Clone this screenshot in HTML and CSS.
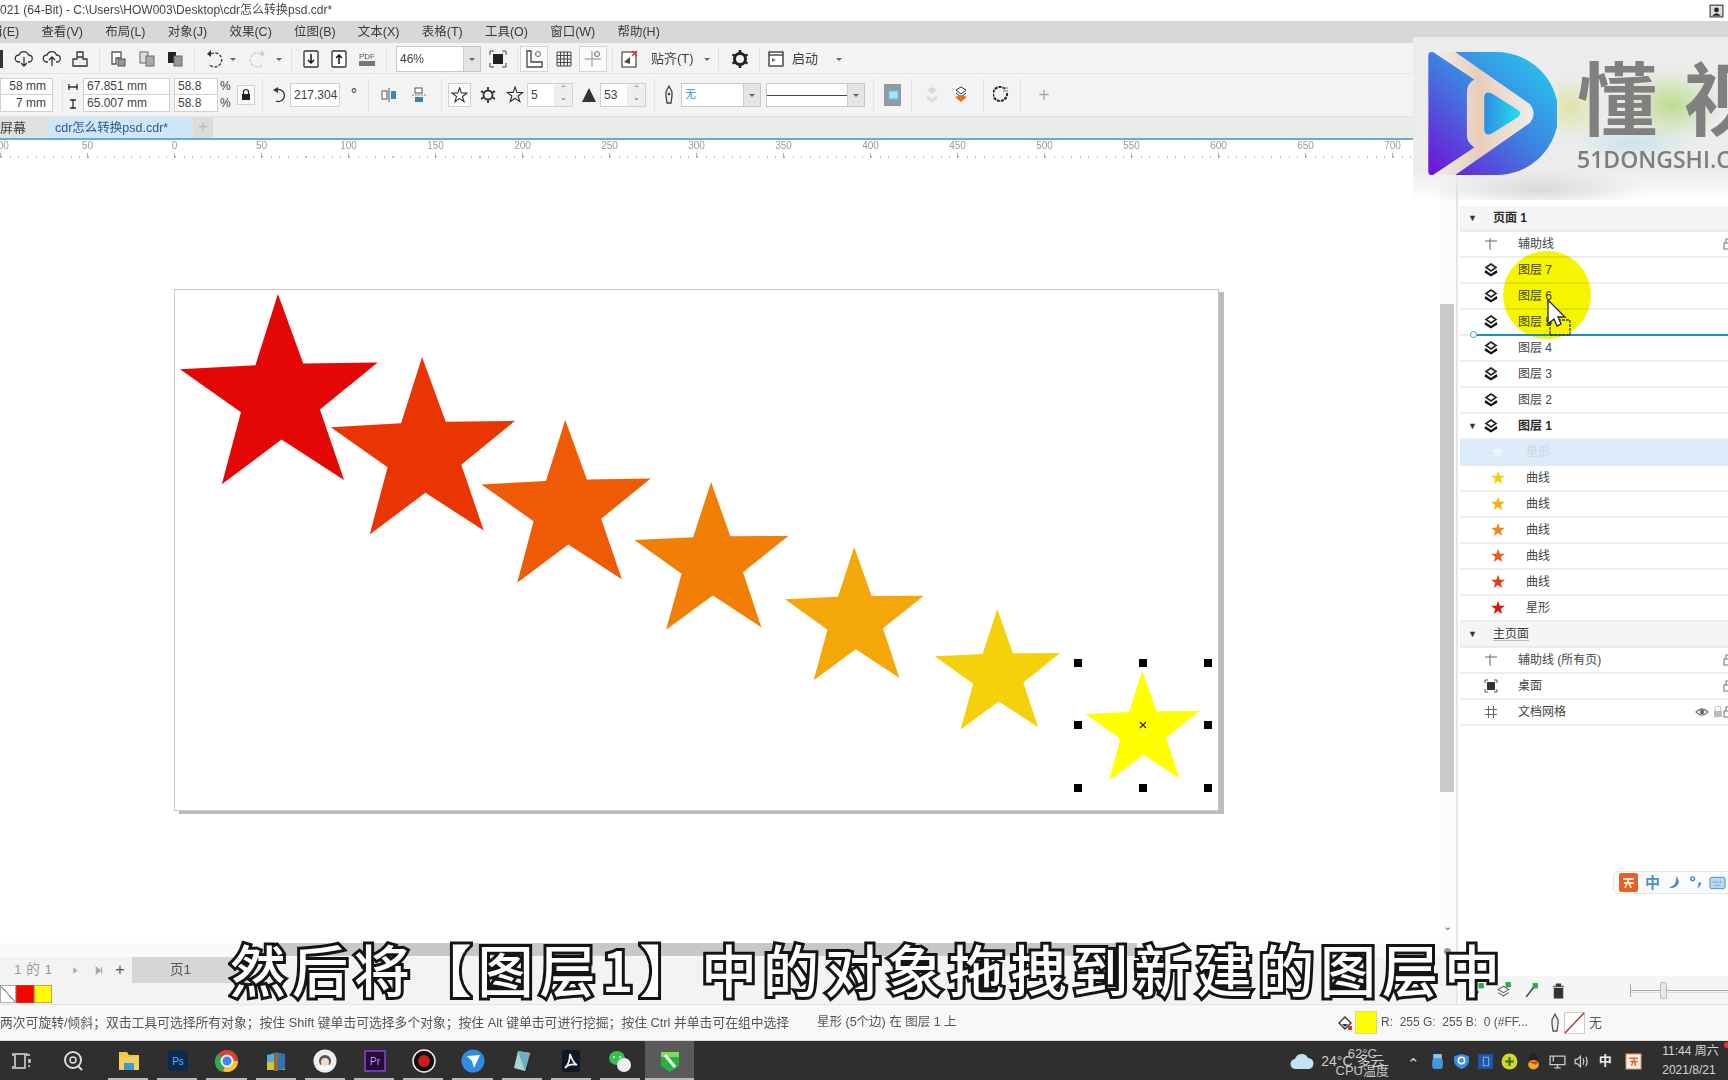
FILE: index.html
```html
<!DOCTYPE html>
<html lang="zh-CN">
<head>
<meta charset="utf-8">
<title>CorelDRAW</title>
<link rel="stylesheet" href="styles.css">
</head>
<body>
<svg class="defs" width="0" height="0" aria-hidden="true">
  <defs>
    <polygon id="star" points="1.500,-100 23.500,-32.400 95.100,-30.900 38,12.400 58.800,80.900 0,40 -58.800,80.900 -38,12.400 -95.100,-30.900 -22.500,-32.400"/>
    <symbol id="layer" viewBox="0 0 14 14"><path d="M7 1 12 4.500 7 8 2 4.500Z" fill="#fff" stroke="#222" stroke-width="1.600"/><path d="M1.500 7 7 11 12.500 7 13.500 9.500 7 13.500 .5 9.500Z" fill="#111"/></symbol>
    <symbol id="guide" viewBox="0 0 14 14"><path d="M6 1V13M1 4H13" stroke="#666" stroke-width="1" fill="none"/></symbol>
    <symbol id="printer" viewBox="0 0 14 14"><path d="M4 6V2H10V6M2 6H12V12H2Z" fill="none" stroke="#777" stroke-width="1.100"/></symbol>
    <symbol id="caret" viewBox="0 0 10 10"><path d="M2 4H8L5 7Z" fill="#666"/></symbol>
    <symbol id="cloudd" viewBox="0 0 20 20"><path d="M6 13H4.500A3.500 3.500 0 0 1 5 6 5 5 0 0 1 14.500 6 3.500 3.500 0 0 1 15 13H14M10 8V17M7 14 10 17 13 14" fill="none" stroke="#333" stroke-width="1.300"/></symbol>
    <symbol id="cloudu" viewBox="0 0 20 20"><path d="M6 13H4.500A3.500 3.500 0 0 1 5 6 5 5 0 0 1 14.500 6 3.500 3.500 0 0 1 15 13H14M10 17V8M7 11 10 8 13 11" fill="none" stroke="#333" stroke-width="1.300"/></symbol>
    <symbol id="doc" viewBox="0 0 20 20"><path d="M3 3H12V9H7V15H3Z" fill="#fff" stroke="#555" stroke-width="1.300"/><rect x="9" y="10" width="7" height="7" fill="#999" stroke="#555"/></symbol>
    <symbol id="imp" viewBox="0 0 20 20"><rect x="3" y="2" width="14" height="16" rx="1" fill="#fff" stroke="#333" stroke-width="1.300"/><path d="M10 5V14M7 11 10 14 13 11" fill="none" stroke="#111" stroke-width="1.500"/></symbol>
    <symbol id="exp" viewBox="0 0 20 20"><rect x="3" y="2" width="14" height="16" rx="1" fill="#fff" stroke="#333" stroke-width="1.300"/><path d="M10 15V6M7 9 10 6 13 9" fill="none" stroke="#111" stroke-width="1.500"/></symbol>
    <symbol id="gear" viewBox="0 0 20 20"><circle cx="10" cy="10" r="5.500" fill="none" stroke="#222" stroke-width="3"/><path d="M10 1V4M10 16V19M2.500 5.500 5 7M15 13 17.500 14.500M2.500 14.500 5 13M15 7 17.500 5.500" stroke="#222" stroke-width="2.600"/></symbol>
    <symbol id="ostar" viewBox="-110 -110 220 220"><use href="#star" fill="none" stroke="#333" stroke-width="14"/></symbol>
    <symbol id="eye" viewBox="0 0 14 14"><path d="M1 7Q7 1 13 7 7 13 1 7Z" fill="none" stroke="#777" stroke-width="1.200"/><circle cx="7" cy="7" r="2.200" fill="#666"/></symbol>
  </defs>
</svg>

<header class="title">
  <span>021 (64-Bit) - C:\Users\HOW003\Desktop\cdr怎么转换psd.cdr*</span>
  <svg class="profile" viewBox="0 0 14 14"><rect x="1" y="2" width="12" height="11" fill="#ddd" stroke="#333"/><circle cx="7" cy="6.500" r="2.200" fill="#222"/><path d="M3 12Q7 7 11 12Z" fill="#222"/></svg>
</header>

<nav class="menu">
  <span class="menu-first">辑(E)</span><span>查看(V)</span><span>布局(L)</span><span>对象(J)</span><span>效果(C)</span><span>位图(B)</span><span>文本(X)</span><span>表格(T)</span><span>工具(O)</span><span>窗口(W)</span><span>帮助(H)</span>
</nav>

<div class="toolbar">
  <i class="sliver"></i>
  <i class="tc"><svg class="i"><use href="#cloudd"/></svg></i>
  <i class="tc"><svg class="i"><use href="#cloudu"/></svg></i>
  <i class="tc"><svg class="i" viewBox="0 0 20 20"><path d="M7 8V3H13V8M3 10H7V8H13V10H17V17H3Z" fill="none" stroke="#333" stroke-width="1.300"/></svg></i>
  <i class="sep"></i>
  <i class="tc"><svg class="i"><use href="#doc"/></svg></i>
  <i class="tc"><svg class="i" viewBox="0 0 20 20"><rect x="3" y="3" width="8" height="11" fill="#ddd" stroke="#666"/><rect x="9" y="7" width="8" height="10" fill="#aaa" stroke="#666"/></svg></i>
  <i class="tc"><svg class="i" viewBox="0 0 20 20"><rect x="3" y="3" width="8" height="11" fill="#222"/><rect x="9" y="7" width="8" height="10" fill="#999" stroke="#666"/></svg></i>
  <i class="sep"></i>
  <i class="tc"><svg class="i" viewBox="0 0 20 20"><path d="M7 5A7 7 0 1 1 5 15" fill="none" stroke="#444" stroke-width="1.400" stroke-dasharray="3 1.500"/><path d="M7 1V8L3 5Z" fill="#333"/></svg></i>
  <i class="tcar"><svg class="i9"><use href="#caret"/></svg></i>
  <i class="tc ml6"><svg class="i" viewBox="0 0 20 20"><path d="M13 5A7 7 0 1 0 15 15" fill="none" stroke="#ccc" stroke-width="1.400" stroke-dasharray="3 1.500"/><path d="M13 1V8L17 5Z" fill="#ccc"/></svg></i>
  <i class="tcar wide"><svg class="i9"><use href="#caret"/></svg></i>
  <i class="sep"></i>
  <i class="tc"><svg class="i"><use href="#imp"/></svg></i>
  <i class="tc"><svg class="i"><use href="#exp"/></svg></i>
  <i class="tc"><span class="pdf">PDF</span></i>
  <i class="sep"></i>
  <div class="combo zoomc ml4"><span>46%</span><b><svg class="i9"><use href="#caret"/></svg></b></div>
  <i class="tc ml3"><svg class="i" viewBox="0 0 20 20"><rect x="5" y="5" width="10" height="10" fill="#222"/><path d="M2 6V2H6M14 2H18V6M2 14V18H6M14 18H18V14" fill="none" stroke="#444"/></svg></i>
  <i class="sep tight"></i>
  <i class="tc on"><svg class="i" viewBox="0 0 20 20"><path d="M3 2H7V13H18V18H3Z" fill="#fff" stroke="#444" stroke-width="1.300"/><circle cx="14" cy="5" r="2.500" fill="none" stroke="#666"/></svg></i>
  <i class="tc ml2"><svg class="i" viewBox="0 0 20 20"><path d="M3 3H17V17H3ZM3 6.500H17M3 10H17M3 13.500H17M6.500 3V17M10 3V17M13.500 3V17" fill="none" stroke="#444"/></svg></i>
  <i class="tc on ml1"><svg class="i" viewBox="0 0 20 20"><path d="M9 2V18M2 10H18" stroke="#aaa" stroke-width="1.300"/><circle cx="14" cy="5" r="2.500" fill="none" stroke="#666"/></svg></i>
  <i class="sep tight"></i>
  <i class="tc"><svg class="i" viewBox="0 0 20 20"><rect x="3" y="3" width="14" height="15" fill="#fff" stroke="#555" stroke-width="1.300"/><path d="M5 13 11 8V15Z" fill="#444"/><path d="M13 2 18 7M18 2 13 7" stroke="#d33" stroke-width="1.500"/></svg></i>
  <span class="lbl ml8">贴齐(T)</span>
  <i class="tcar ml8 w12"><svg class="i9"><use href="#caret"/></svg></i>
  <i class="sep"></i>
  <i class="tc ml2"><svg class="i"><use href="#gear"/></svg></i>
  <i class="sep tight"></i>
  <i class="tc"><svg class="i" viewBox="0 0 20 20"><rect x="3" y="3" width="14" height="14" fill="#fff" stroke="#333" stroke-width="1.300"/><path d="M3 6H17" stroke="#333" stroke-width="1.300"/><path d="M6 9 10 11 6 13Z" fill="#777"/></svg></i>
  <span class="lbl short ml2">启动</span>
  <i class="tcar ml13 w12"><svg class="i9"><use href="#caret"/></svg></i>
</div>

<div class="propbar">
  <div class="stack w53"><span class="field">58 mm</span><span class="field">7 mm</span></div>
  <i class="sep2 ml9"></i>
  <div class="stack w10 ml5 icons">
    <svg class="i10" viewBox="0 0 10 10"><path d="M0 5H10M1 2V8M9 2V8" stroke="#333" stroke-width="1.300"/></svg>
    <svg class="i10" viewBox="0 0 10 10"><path d="M5 0V10M2 1H8M2 9H8" stroke="#333" stroke-width="1.300"/></svg>
  </div>
  <div class="stack w87 ml5"><span class="field">67.851 mm</span><span class="field">65.007 mm</span></div>
  <div class="stack w44 ml4"><span class="field">58.8</span><span class="field">58.8</span></div>
  <div class="stack w12 ml2 pct"><span>%</span><span>%</span></div>
  <i class="lockb ml5"><svg class="i14" viewBox="0 0 14 14"><path d="M4.500 6V4A2.500 2.500 0 0 1 9.500 4V6" fill="none" stroke="#222" stroke-width="1.200"/><rect x="3" y="6" width="8" height="6" fill="#222"/></svg></i>
  <i class="sep2 ml7"></i>
  <i class="ic16 ml8"><svg viewBox="0 0 16 16"><path d="M5 3A6 6 0 1 1 5 14" fill="none" stroke="#333" stroke-width="1.200"/><path d="M7 0V6L2 3Z" fill="#333"/></svg></i>
  <span class="field single w50 ml3">217.304</span>
  <span class="deg ml8">°</span>
  <i class="sep2 ml8"></i>
  <i class="ic16 ml12"><svg viewBox="0 0 16 16"><path d="M8 1V15" stroke="#555"/><rect x="1" y="4" width="5" height="8" fill="#fff" stroke="#555"/><rect x="10" y="4" width="5" height="8" fill="#3c86b8"/></svg></i>
  <i class="ic16 ml14"><svg viewBox="0 0 16 16"><path d="M1 8H15" stroke="#777" stroke-dasharray="2 1"/><rect x="4" y="1" width="7" height="5" fill="#fff" stroke="#555"/><rect x="4" y="10" width="8" height="5" fill="#2f85b9"/></svg></i>
  <i class="sep2 ml14"></i>
  <i class="starbox ml6"><svg class="i16"><use href="#ostar"/></svg></i>
  <i class="ic18 ml8"><svg viewBox="0 0 18 18"><circle cx="9" cy="9" r="4.500" fill="none" stroke="#333" stroke-width="1.800"/><path d="M9 1V4M9 14V17M2 5 5 7M13 11 16 13M2 13 5 11M13 7 16 5" stroke="#333" stroke-width="1.800"/></svg></i>
  <i class="ic18 ml9"><svg class="i18"><use href="#ostar"/></svg></i>
  <div class="spin w46 ml3"><span>5</span><b>⌃<br>⌄</b></div>
  <i class="ic16 ml8"><svg viewBox="0 0 16 16"><path d="M8 1 15 15H1Z" fill="#333"/></svg></i>
  <div class="spin w46 ml3"><span>53</span><b>⌃<br>⌄</b></div>
  <i class="sep2 ml8"></i>
  <i class="ic12 ml8"><svg viewBox="0 0 12 20"><path d="M6 1 9 7V11L8 18H4L3 11V7Z" fill="#eee" stroke="#444" stroke-width="1.300"/><circle cx="6" cy="9" r="1.300" fill="#444"/></svg></i>
  <div class="combo w80 ml6"><span class="noneval">无</span><b><svg class="i9"><use href="#caret"/></svg></b></div>
  <div class="combo w99 ml5"><span class="linev"></span><b><svg class="i9"><use href="#caret"/></svg></b></div>
  <i class="sep2 ml8"></i>
  <i class="bluebox ml10"><svg viewBox="0 0 17 22"><rect width="17" height="22" fill="#8f9aa3"/><rect x="5" y="7" width="9" height="8" fill="#a5e3f5" stroke="#5cc4e4"/></svg></i>
  <i class="sep2 ml10"></i>
  <i class="ic16 ml12"><svg viewBox="0 0 16 18"><path d="M8 1 13 4 8 8 3 4Z" fill="#d8d8d8"/><path d="M3 9 8 13 13 9V13L8 17 3 13Z" fill="#dedede"/></svg></i>
  <i class="ic16 ml13"><svg viewBox="0 0 16 18"><path d="M8 1 13 4 8 8 3 4Z" fill="#fff" stroke="#333"/><path d="M3 7 8 11 13 7" fill="none" stroke="#333"/><path d="M2 11 8 16 14 11 8 9Z" fill="#e5701f"/></svg></i>
  <i class="sep2 ml14"></i>
  <i class="ic16 ml9"><svg viewBox="0 0 16 18"><path d="M12 3A7 7 0 1 0 14 7" fill="none" stroke="#222" stroke-width="2" stroke-dasharray="3 1"/><path d="M10 2H15M10 5H15" stroke="#777"/></svg></i>
  <i class="sep2 ml11"></i>
  <span class="plus ml15">+</span>
</div>

<div class="tabs">
  <span class="tab-old">屏幕</span>
  <span class="tab-cur">cdr怎么转换psd.cdr*</span>
  <span class="tab-add">+</span>
</div>

<div class="ruler">
  <span>100</span><span>50</span><span>0</span><span>50</span><span>100</span><span>150</span><span>200</span><span>250</span><span>300</span><span>350</span><span>400</span><span>450</span><span>500</span><span>550</span><span>600</span><span>650</span><span>700</span>
</div>

<div class="work">
  <div class="left">
    <div class="canvasrow">
      <main class="area">
        <div class="page">
          <svg class="art" viewBox="174 289 1045 522">
            <use href="#star" fill="#e50606" transform="translate(280 398) rotate(-2) scale(1.040)"/>
            <use href="#star" fill="#ea3402" transform="translate(424 454) rotate(-2) scale(.97)"/>
            <use href="#star" fill="#ee5a06" transform="translate(567 509) rotate(-2) scale(.89)"/>
            <use href="#star" fill="#f17f06" transform="translate(712 563) rotate(-1.500) scale(.81)"/>
            <use href="#star" fill="#f3a709" transform="translate(855 620) rotate(-1.500) scale(.73)"/>
            <use href="#star" fill="#f6d10b" transform="translate(998 675) rotate(-1.500) scale(.66)"/>
            <use href="#star" fill="#ffff00" transform="translate(1143 731) rotate(-1.500) scale(.6)"/>
            <g fill="#000">
              <rect x="1074" y="659" width="8" height="8"/><rect x="1139" y="659" width="8" height="8"/><rect x="1204" y="659" width="8" height="8"/>
              <rect x="1074" y="721" width="8" height="8"/><rect x="1204" y="721" width="8" height="8"/>
              <rect x="1074" y="784" width="8" height="8"/><rect x="1139" y="784" width="8" height="8"/><rect x="1204" y="784" width="8" height="8"/>
            </g>
            <path d="M1140 722 1146 728M1146 722 1140 728" stroke="#333" stroke-width="1.300"/>
          </svg>
        </div>
      </main>
      <div class="vscroll"><div class="vthumb"></div><span class="vdown">⌄</span><i class="vdot"></i></div>
    </div>
    <div class="hscroll"><div class="hthumb"></div></div>
    <div class="nav">
      <span class="pageof">1 的 1</span>
      <svg class="navi" viewBox="0 0 10 10"><path d="M3 2 7 5 3 8Z" fill="#aaa"/></svg>
      <svg class="navi ml13" viewBox="0 0 10 10"><path d="M2 2 6 5 2 8ZM7 2V8" fill="#aaa" stroke="#aaa"/></svg>
      <span class="navplus">+</span>
      <span class="pagetab">页1</span>
    </div>
    <div class="palette">
      <i class="sw none"></i><i class="sw red"></i><i class="sw yel"></i>
    </div>
  </div>

  <aside class="panel">
    <div class="rows">
      <div class="row head"><span class="tw">▼</span><b class="hname">页面 1</b></div>
      <div class="row"><span class="tw"></span><svg class="ic"><use href="#guide"/></svg><span class="nm">辅助线</span><svg class="rp"><use href="#printer"/></svg></div>
      <div class="row"><span class="tw"></span><svg class="ic"><use href="#layer"/></svg><span class="nm">图层 7</span></div>
      <div class="row"><span class="tw"></span><svg class="ic"><use href="#layer"/></svg><span class="nm">图层 6</span></div>
      <div class="row"><span class="tw"></span><svg class="ic"><use href="#layer"/></svg><span class="nm">图层 5</span></div>
      <div class="row"><span class="tw"></span><svg class="ic"><use href="#layer"/></svg><span class="nm">图层 4</span></div>
      <div class="row"><span class="tw"></span><svg class="ic"><use href="#layer"/></svg><span class="nm">图层 3</span></div>
      <div class="row"><span class="tw"></span><svg class="ic"><use href="#layer"/></svg><span class="nm">图层 2</span></div>
      <div class="row"><span class="tw">▼</span><svg class="ic"><use href="#layer"/></svg><b class="nm">图层 1</b></div>
      <div class="row sel"><svg class="st" viewBox="-110 -110 220 220"><use href="#star" fill="#eef6fd"/></svg><span class="nm2">星形</span></div>
      <div class="row"><svg class="st" viewBox="-110 -110 220 220"><use href="#star" fill="#f6d10b"/></svg><span class="nm2">曲线</span></div>
      <div class="row"><svg class="st" viewBox="-110 -110 220 220"><use href="#star" fill="#f3b00f"/></svg><span class="nm2">曲线</span></div>
      <div class="row"><svg class="st" viewBox="-110 -110 220 220"><use href="#star" fill="#f1871a"/></svg><span class="nm2">曲线</span></div>
      <div class="row"><svg class="st" viewBox="-110 -110 220 220"><use href="#star" fill="#ee5a1c"/></svg><span class="nm2">曲线</span></div>
      <div class="row"><svg class="st" viewBox="-110 -110 220 220"><use href="#star" fill="#e83a1a"/></svg><span class="nm2">曲线</span></div>
      <div class="row"><svg class="st" viewBox="-110 -110 220 220"><use href="#star" fill="#e01212"/></svg><span class="nm2">星形</span></div>
      <div class="row head"><span class="tw">▼</span><span class="hname">主页面</span></div>
      <div class="row"><span class="tw"></span><svg class="ic"><use href="#guide"/></svg><span class="nm">辅助线 (所有页)</span><svg class="rp"><use href="#printer"/></svg></div>
      <div class="row"><span class="tw"></span><svg class="ic" viewBox="0 0 14 14"><rect x="3" y="3" width="8" height="8" fill="#333"/><path d="M1 4V1H4M10 1H13V4M1 10V13H4M10 13H13V10" fill="none" stroke="#555"/></svg><span class="nm">桌面</span><svg class="rp"><use href="#printer"/></svg></div>
      <div class="row"><span class="tw"></span><svg class="ic" viewBox="0 0 14 14"><path d="M4.500 1V13M9.500 1V13M1 4.500H13M1 9.500H13" stroke="#666" fill="none"/></svg><span class="nm">文档网格</span><svg class="rp2"><use href="#eye"/></svg><svg class="rp2" viewBox="0 0 14 14"><path d="M4 6V4A3 3 0 0 1 10 4V6" fill="none" stroke="#bbb"/><rect x="3" y="6" width="8" height="6" fill="#bbb"/></svg><svg class="rp"><use href="#printer"/></svg></div>
    </div>
    <div class="ime">
      <svg class="imeo" viewBox="0 0 19 19"><rect width="19" height="19" rx="2" fill="#e4622a"/><path d="M4 6H15M5 10H15M10 6 6 15M10 10 12 15" stroke="#fde3d0" stroke-width="1.800" fill="none"/></svg>
      <span class="imez">中</span>
      <svg class="imei" viewBox="0 0 16 16"><path d="M10 1Q15 8 10 12 6 15 2 13 8 12 9 8 10 5 10 1Z" fill="#3f8ccf"/></svg>
      <svg class="imei" viewBox="0 0 16 16"><circle cx="5" cy="4" r="2" fill="none" stroke="#3f8ccf" stroke-width="1.500"/><path d="M11 8H14Q14 12 10 14 12 11 11 8Z" fill="#3f8ccf"/></svg>
      <svg class="imek" viewBox="0 0 18 14"><rect x="1" y="1" width="16" height="12" rx="2" fill="#bcd8ef" stroke="#3f8ccf"/><path d="M4 6H14M6 9.500H12" stroke="#3f8ccf" stroke-dasharray="1.500 1"/></svg>
    </div>
    <div class="paneltools">
      <svg class="pt" viewBox="0 0 16 16"><path d="M6 3V12M3 9 6 12 9 9" fill="none" stroke="#333" stroke-width="1.300"/><rect x="9" y="1" width="5" height="5" fill="#2ba84a"/></svg>
      <svg class="pt" viewBox="0 0 16 16"><path d="M7 4 12 7 7 10 2 7ZM2 10 7 13 12 10" fill="none" stroke="#666"/><rect x="9" y="0" width="5" height="5" fill="#2ba84a"/></svg>
      <svg class="pt" viewBox="0 0 16 16"><path d="M3 14 10 5" stroke="#444" stroke-width="1.500"/><rect x="9" y="1" width="5" height="5" fill="#2ba84a"/></svg>
      <svg class="pt" viewBox="0 0 16 16"><path d="M3 4H13M6 4V2H10V4M4 6H12V15H4Z" fill="#333" stroke="#333"/></svg>
      <div class="slider"><i class="knob"></i><i class="ktick"></i></div>
    </div>
  </aside>
</div>

<footer class="status">
  <span class="hint">两次可旋转/倾斜；双击工具可选择所有对象；按住 Shift 键单击可选择多个对象；按住 Alt 键单击可进行挖掘；按住 Ctrl 并单击可在组中选择</span>
  <span class="objinfo">星形 (5个边) 在 图层 1 上</span>
  <svg class="fillic" viewBox="0 0 16 16"><path d="M8 2 14 8 8 14 2 8Z" fill="#fff" stroke="#333" stroke-width="1.400"/><path d="M5 9H11L8 12Z" fill="#333"/><rect x="11" y="11" width="4" height="4" fill="#d33"/></svg>
  <i class="fillsw"></i>
  <span class="rgb">R:&nbsp;&nbsp;255 G:&nbsp;&nbsp;255 B:&nbsp;&nbsp;0 (#FF...</span>
  <svg class="penic" viewBox="0 0 12 20"><path d="M6 1 9 7V11L8 18H4L3 11V7Z" fill="#eee" stroke="#555" stroke-width="1.300"/></svg>
  <svg class="nonesw" viewBox="0 0 21 22"><rect x=".5" y=".5" width="20" height="21" fill="#fff" stroke="#ccc"/><path d="M1 21 20 1" stroke="#b53a3a" stroke-width="1.500"/></svg>
  <span class="noneword">无</span>
</footer>

<div class="taskbar">
  <i class="tk first"><svg class="ti" viewBox="0 0 24 24"><path d="M5 5H15V19H5ZM18 6H20M18 11H20V13H18M18 17H20M3 4V7M3 17V20M17 4V7" fill="none" stroke="#ddd" stroke-width="1.500"/></svg></i>
  <i class="tk second"><svg class="ti" viewBox="0 0 24 24"><circle cx="11" cy="11" r="8" fill="none" stroke="#ddd" stroke-width="2"/><circle cx="11" cy="11" r="3" fill="none" stroke="#ddd" stroke-width="1.500"/><path d="M16 17 20 21" stroke="#ddd" stroke-width="2"/></svg></i>
  <i class="tk app"><svg class="ti" viewBox="0 0 24 24"><path d="M2 3H10L12 6H22V21H2Z" fill="#f4c63d"/><rect x="2" y="8" width="20" height="13" fill="#f1cf62"/><rect x="7" y="14" width="10" height="7" fill="#3f9ad0"/></svg></i>
  <i class="tk app"><svg class="ti" viewBox="0 0 24 24"><rect x="2" y="2" width="20" height="20" rx="3" fill="#0c2a4f"/><text x="12" y="16" class="ttxt blue">Ps</text></svg></i>
  <i class="tk app"><svg class="ti" viewBox="0 0 24 24"><circle cx="12" cy="12" r="11" fill="#d9432f"/><path d="M12 12 23 12A11 11 0 0 1 8 22.300Z" fill="#f4c430"/><path d="M12 12 7 23A11 11 0 0 1 3 5Z" fill="#35a852"/><circle cx="12" cy="12" r="5.500" fill="#4285f4" stroke="#eee" stroke-width="2"/></svg></i>
  <i class="tk app"><svg class="ti" viewBox="0 0 24 24"><path d="M3 6 11 4V21L3 20Z" fill="#5aa8dc"/><path d="M3 13H21V21H3Z" fill="#d8c23a"/><path d="M11 3 21 5V20L11 22Z" fill="#2f74b5"/><rect x="10" y="4" width="4" height="18" fill="#8a6d2f"/></svg></i>
  <i class="tk app"><svg class="ti" viewBox="0 0 24 24"><circle cx="12" cy="12" r="11.500" fill="#eee"/><circle cx="12" cy="12" r="6" fill="#555"/><path d="M5 18Q12 11 19 18 12 24 5 18Z" fill="#fff"/><circle cx="12" cy="13" r="4" fill="#f3d9c6"/></svg></i>
  <i class="tk app"><svg class="ti" viewBox="0 0 24 24"><rect x="2" y="2" width="20" height="20" fill="#2a0a3d" stroke="#8a45d6" stroke-width="1.500"/><text x="12" y="16" class="ttxt purple">Pr</text></svg></i>
  <i class="tk app"><svg class="ti" viewBox="0 0 24 24"><circle cx="12" cy="12" r="11" fill="#111" stroke="#eee" stroke-width="1.500"/><circle cx="12" cy="12" r="6" fill="#d11a1a"/></svg></i>
  <i class="tk app"><svg class="ti" viewBox="0 0 24 24"><circle cx="12" cy="12" r="11.500" fill="#2f8ce0"/><path d="M6 7 19 6 13 19 11 12Z" fill="#fff"/></svg></i>
  <i class="tk app"><svg class="ti" viewBox="0 0 24 24"><path d="M8 2 20 4 15 22 4 19Z" fill="#a8d6d0"/><path d="M8 2 20 4 15 22Z" fill="#6fb0c0"/></svg></i>
  <i class="tk app"><svg class="ti" viewBox="0 0 24 24"><rect x="3" y="1" width="18" height="22" rx="3" fill="#101828"/><path d="M11 5Q14 14 18 16 11 14 6 19 11 14 11 5Z" fill="none" stroke="#eee" stroke-width="1.800"/></svg></i>
  <i class="tk app"><svg class="ti" viewBox="0 0 24 24"><ellipse cx="9" cy="9" rx="8" ry="7" fill="#35c24a"/><circle cx="16" cy="16" r="7" fill="#eee"/><circle cx="6" cy="8" r="1" fill="#fff"/><circle cx="12" cy="8" r="1" fill="#fff"/></svg></i>
  <i class="tk app active"><svg class="ti" viewBox="0 0 24 24"><path d="M3 3H21V17L12 23 3 17Z" fill="#25b53d"/><path d="M3 3H21V8H3Z" fill="#7ddc5a"/><path d="M7 6 17 18" stroke="#fff" stroke-width="3"/></svg></i>
  <div class="weather">
    <svg class="cloud" viewBox="0 0 24 18"><path d="M6 17A5 5 0 0 1 5 7 7 7 0 0 1 18 6 5.500 5.500 0 0 1 18 17Z" fill="#bfe3f5"/></svg>
    <span class="wtext">24°C 多云</span>
    <span class="cpu">62°C<br>CPU温度</span>
  </div>
  <div class="tray">
    <span class="tr upc">⌃</span>
    <span class="tr"><svg class="tri" viewBox="0 0 16 16"><rect x="4" y="1" width="8" height="5" fill="#8fc7ea"/><rect x="3" y="5" width="10" height="10" rx="3" fill="#3d9be0"/></svg></span>
    <span class="tr"><svg class="tri" viewBox="0 0 16 16"><path d="M8 1 15 3V8Q14 13 8 15 2 13 1 8V3Z" fill="#3b8ee8"/><circle cx="8" cy="7" r="3" fill="none" stroke="#fff" stroke-width="1.500"/></svg></span>
    <span class="tr"><svg class="tri" viewBox="0 0 16 16"><rect x="1" y="1" width="14" height="14" fill="#1c57a8"/><path d="M6 4H11V12H6Z" fill="none" stroke="#7bb0e8"/></svg></span>
    <span class="tr"><svg class="tri" viewBox="0 0 16 16"><circle cx="8" cy="8" r="7.500" fill="#d6d62a"/><path d="M8 4V12M4 8H12" stroke="#2b6b1e" stroke-width="2"/></svg></span>
    <span class="tr"><svg class="tri" viewBox="0 0 16 16"><ellipse cx="8" cy="5" rx="4" ry="4.500" fill="#222"/><ellipse cx="8" cy="11" rx="5" ry="4.500" fill="#f2a81d"/><path d="M3 8H13L10 11Z" fill="#d33"/></svg></span>
    <span class="tr"><svg class="tri" viewBox="0 0 16 16"><path d="M1 3H15V11H1ZM8 11V14M5 14H11M4 3V8" fill="none" stroke="#ccc" stroke-width="1.200"/></svg></span>
    <span class="tr"><svg class="tri" viewBox="0 0 16 16"><path d="M2 6H4L7 3V13L4 10H2ZM9.500 5Q11 8 9.500 11M12 3.500Q14.500 8 12 12.500" fill="none" stroke="#ccc" stroke-width="1.200"/></svg></span>
    <span class="tr zh">中</span>
    <span class="tr wps"><svg class="tri" viewBox="0 0 16 16"><rect x="1" y="1" width="14" height="14" fill="#fff3e4" stroke="#e8a878"/><path d="M4 5H12M5 8H12M9 5 6 12M9 8 10 12" stroke="#e0602a" stroke-width="1.300" fill="none"/></svg></span>
    <span class="clock">11:44 周六<br>2021/8/21</span>
  </div>
</div>

<div class="wm">
  <svg class="wmlogo" viewBox="84 155 386 370">
    <defs>
      <linearGradient id="gd" x1="1" y1="0" x2="0" y2="1"><stop offset="0" stop-color="#22d3ee"/><stop offset=".5" stop-color="#3f7fe0"/><stop offset="1" stop-color="#6f10d6"/></linearGradient>
      <linearGradient id="gp" x1="0" y1="0" x2="1" y2="0"><stop offset="0" stop-color="#2f8de4"/><stop offset="1" stop-color="#22e0ee"/></linearGradient>
      <linearGradient id="gr" x1="0" y1="0" x2="1" y2="0"><stop offset="0" stop-color="#f0f0f0"/><stop offset=".45" stop-color="#e8cdb8"/><stop offset="1" stop-color="#eee"/></linearGradient>
    </defs>
    <path d="M84 165Q84 155 94 155H290A185 185 0 0 1 290 525H94Q84 525 84 515Z" fill="url(#gd)"/>
    <path d="M98 155H165L390 312Q412 340 390 368L165 525H98L222 442Q200 428 200 405V275Q200 252 222 238Z" fill="url(#gr)"/>
    <path d="M252 295Q252 270 275 280L352 328Q370 340 352 352L275 400Q252 410 252 385Z" fill="url(#gp)"/>
  </svg>
  <div class="wmtext">
    <span class="wmcn">懂 视</span>
    <span class="wmen">51DONGSHI.COM</span>
  </div>
</div>

<div class="spot"></div>
<div class="dropline"><i></i></div>
<svg class="cursor" viewBox="0 0 24 38"><path d="M3 22H23V37H3Z" fill="none" stroke="#3a3a2a" stroke-width="1.300" stroke-dasharray="3 1"/><path d="M1 2V26L7 21 10 28 14 26 11 19H18Z" fill="#fff" stroke="#222" stroke-width="1.300"/></svg>
<div class="subtitle">然后将【图层1】中的对象拖拽到新建的图层中</div>
<i class="reddot"></i>
</body>
</html>
```

FILE: styles.css
```css
* { box-sizing: border-box; }
html, body { margin: 0; padding: 0; }
body {
  position: relative;
  width: 1728px;
  height: 1080px;
  overflow: hidden;
  display: flex;
  flex-direction: column;
  background: #fff;
  color: #3f3f3f;
  font: 12px/1.2 "Liberation Sans", "Noto Sans CJK SC", sans-serif;
  filter: blur(.4px);
}
i, b { font-style: normal; }
.defs { position: absolute; }
svg { display: block; flex: none; }

.ml1 { margin-left: 1px; } .ml2 { margin-left: 2px; } .ml3 { margin-left: 3px; }
.ml4 { margin-left: 4px; } .ml5 { margin-left: 5px; } .ml6 { margin-left: 6px; }
.ml7 { margin-left: 7px; } .ml8 { margin-left: 8px; } .ml9 { margin-left: 9px; }
.ml10 { margin-left: 10px; } .ml11 { margin-left: 11px; } .ml12 { margin-left: 12px; }
.ml13 { margin-left: 13px; } .ml14 { margin-left: 14px; } .ml15 { margin-left: 15px; }

.title { height: 21px; flex: none; display: flex; align-items: center; justify-content: space-between; padding-right: 4px; font-size: 12px; color: #444; }
.profile { width: 15px; height: 15px; }

.menu { height: 22px; flex: none; background: #d8d8d8; display: flex; align-items: center; gap: 22.200px; font-size: 12.500px; color: #3a3a3a; }
.menu-first { margin-left: -10px; }

.toolbar { height: 31px; flex: none; background: #f3f3f3; display: flex; align-items: center; padding-top: 2px; border-bottom: 1px solid #e4e4e4; }
.sliver { width: 3px; height: 18px; flex: none; background: #333; margin-right: 7px; }
.tc { width: 28px; height: 26px; flex: none; display: flex; align-items: center; justify-content: center; }
.tc.on { background: #fbfbfb; border: 1px solid #d4d4d4; }
.i { width: 20px; height: 20px; }
.i9 { width: 10px; height: 10px; }
.tcar { width: 10px; flex: none; display: flex; justify-content: center; }
.tcar.wide { width: 14px; }
.tcar.w12 { width: 12px; }
.sep { width: 1px; height: 24px; flex: none; background: #e0e0e0; margin: 0 5px; }
.sep.tight { margin: 0 2px 0 5px; }
.pdf { font-size: 8px; color: #555; border-bottom: 5px solid #777; }
.lbl { font-size: 13px; width: 42px; flex: none; white-space: nowrap; }
.lbl.short { width: 28px; }
.combo { height: 24px; flex: none; display: flex; align-items: stretch; border: 1px solid #c8c8c8; background: #fff; font-size: 12px; }
.combo span { flex: 1; display: flex; align-items: center; padding-left: 3px; }
.combo b { width: 17px; background: #e4e4e4; display: flex; align-items: center; justify-content: center; border-left: 1px solid #ccc; }
.zoomc { width: 85px; height: 26px; }
.w80 { width: 80px; height: 24px; }
.w99 { width: 99px; height: 24px; }
.noneval { color: #2a9ad6; font-size: 11px; }
.linev { position: relative; padding: 0 !important; }
.linev::after { content: ""; height: 1px; width: 100%; background: #444; }

.propbar { height: 43px; flex: none; background: #f3f3f3; display: flex; align-items: center; border-bottom: 1px solid #e4e4e4; }
.stack { flex: none; display: flex; flex-direction: column; height: 34px; }
.field { height: 17px; border: 1px solid #d0d0d0; background: #fff; font-size: 12px; display: flex; align-items: center; padding-left: 3px; white-space: nowrap; }
.field + .field { border-top: 0; }
.stack:first-child .field { justify-content: flex-end; padding-right: 6px; }
.w53 { width: 53px; } .w10 { width: 10px; } .w87 { width: 87px; } .w44 { width: 44px; } .w12 { width: 12px; } .w50 { width: 50px; } .w46 { width: 46px; }
.icons { justify-content: space-around; align-items: center; }
.i10 { width: 10px; height: 10px; }
.pct { font-size: 12px; justify-content: space-around; }
.lockb { width: 18px; height: 20px; flex: none; background: #fafafa; border: 1px solid #d0d0d0; display: flex; align-items: center; justify-content: center; }
.i14 { width: 14px; height: 14px; }
.sep2 { width: 1px; height: 33px; flex: none; background: #e2e2e2; }
.ic16 { width: 16px; height: 18px; flex: none; display: block; }
.ic16 svg { width: 16px; height: 18px; }
.ic18 { width: 18px; height: 18px; flex: none; display: block; }
.ic18 svg, .i18 { width: 18px; height: 18px; }
.ic12 { width: 12px; height: 20px; flex: none; display: block; }
.ic12 svg { width: 12px; height: 20px; }
.single { height: 24px; flex: none; }
.deg { width: 12px; flex: none; font-size: 16px; text-align: center; }
.starbox { width: 23px; height: 24px; flex: none; background: #fbfbfb; border: 1px solid #d0d0d0; display: flex; align-items: center; justify-content: center; }
.i16 { width: 17px; height: 17px; }
.spin { height: 24px; flex: none; display: flex; border: 1px solid #d0d0d0; background: #fff; font-size: 12px; }
.spin span { flex: 1; display: flex; align-items: center; padding-left: 3px; }
.spin b { width: 18px; background: #eee; color: #666; font-size: 8px; line-height: 9px; text-align: center; font-weight: 400; }
.bluebox { width: 17px; height: 22px; flex: none; display: block; }
.bluebox svg { width: 17px; height: 22px; }
.plus { width: 16px; flex: none; font-size: 20px; text-align: center; color: #aaa; }

.tabs { height: 21px; flex: none; background: #ebebeb; display: flex; }
.tab-old { width: 49px; background: #e0e0e0; font-size: 13px; display: flex; align-items: center; padding-top: 1px; }
.tab-cur { width: 144px; background: #cfe5f8; display: flex; align-items: center; padding: 1px 0 0 6px; font-size: 12.500px; color: #2a5c8a; white-space: nowrap; }
.tab-add { width: 20px; background: #dcdcdc; color: #bbb; font-size: 18px; text-align: center; line-height: 20px; }

.ruler {
  height: 20px;
  flex: none;
  border-top: 2px solid #64aecb;
  display: flex;
  font-size: 10px;
  color: #9a9a9a;
  background: repeating-linear-gradient(90deg, #c4c4c4 0 1px, transparent 1px 8.700px) 1px bottom / 100% 2px repeat-x #fff;
}
.ruler span { width: 87px; flex: none; text-align: center; position: relative; line-height: 12px; }
.ruler span:first-child { margin-left: -43px; }
.ruler span::after { content: ""; position: absolute; left: 43px; bottom: 0; width: 1px; height: 5px; background: #aaa; }

.work { height: 846px; flex: none; display: flex; }
.left { width: 1456px; flex: none; display: flex; flex-direction: column; }
.canvasrow { height: 785px; flex: none; display: flex; }
.area { flex: 1; padding: 131px 0 0 174px; background: #fff; }
.page { width: 1045px; height: 522px; background: #fff; border: 1px solid #c8c8c8; box-shadow: 5px 3px 0 #bcbcbc; }
.art { width: 1045px; height: 522px; margin: -1px; overflow: visible; }
.vscroll { width: 16px; flex: none; position: relative; padding-top: 146px; background: #fcfcfc; }
.vthumb { width: 14px; height: 488px; background: #c9c9c9; }
.vdown { position: absolute; left: 3px; bottom: 12px; font-size: 11px; line-height: 10px; color: #666; }
.vdot { position: absolute; left: 4px; bottom: -12px; width: 7px; height: 7px; border-radius: 50%; background: #999; }

.hscroll { height: 14px; flex: none; padding-left: 268px; background: #fafafa; }
.hthumb { width: 869px; height: 13px; background: #c8c8c8; }
.nav { height: 26px; flex: none; display: flex; align-items: center; background: #f3f3f3; padding-left: 14px; color: #999; font-size: 13.500px; }
.pageof { width: 56px; flex: none; letter-spacing: .5px; }
.navi { width: 11px; height: 11px; }
.navplus { margin-left: 9px; font-size: 17px; color: #555; width: 12px; text-align: center; }
.pagetab { margin-left: 6px; width: 117px; height: 26px; background: #d6d6d6; color: #555; display: flex; align-items: center; padding-left: 38px; }
.palette { height: 21px; flex: none; background: #f4f4f4; display: flex; align-items: center; }
.sw { width: 18px; height: 18px; flex: none; display: block; border: 1px solid #b9a94a; }
.sw.none { width: 16px; border-color: #aaa; background: linear-gradient(to top right, #fff 46%, #999 48%, #999 52%, #fff 54%); }
.sw.red { background: #f00; border-color: #c33; }
.sw.yel { background: #ff0; }

.panel { width: 272px; flex: none; border-left: 2px solid #e4e4e4; padding: 48px 0 0 2px; display: flex; flex-direction: column; background: #fff; position: relative; }
.rows { display: flex; flex-direction: column; }
.row { height: 26px; flex: none; display: flex; align-items: center; border-bottom: 2px solid #ececec; font-size: 12px; color: #444; position: relative; }
.row.head { background: #f5f5f5; }
.row.sel { background: #dcebf9; border-bottom-color: #dcebf9; }
.row.sel .nm2 { color: #cfd6dd; }
.tw { width: 24px; flex: none; font-size: 9px; color: #333; text-align: center; padding-left: 1px; }
.ic { width: 14px; height: 14px; }
.nm { margin-left: 20px; white-space: nowrap; }
b.nm, .hname { font-weight: 700; color: #2b2b2b; }
.hname { margin-left: 9px; }
.row.head span.hname { font-weight: 400; color: #3c3c3c; text-decoration: underline; text-underline-offset: 2px; text-decoration-color: #bbb; }
.st { width: 16px; height: 16px; margin-left: 30px; }
.nm2 { margin-left: 20px; }
.rp { width: 14px; height: 14px; position: absolute; right: -8px; }
.rp2 { width: 14px; height: 14px; position: absolute; right: 19px; }
.rp2 + .rp2 { right: 3px; }
.ime { position: absolute; left: 155px; top: 713px; width: 130px; height: 23px; display: flex; align-items: center; padding-left: 5px; background: #fbfbfb; border: 1px solid #e6e6e6; border-radius: 5px; }
.imeo { width: 19px; height: 19px; }
.imez { margin-left: 7px; font-size: 15px; font-weight: 700; color: #4a8fc8; width: 16px; }
.imei { width: 15px; height: 15px; margin-left: 6px; }
.imek { width: 17px; height: 14px; margin-left: 6px; }
.paneltools { margin-top: auto; height: 28px; flex: none; display: flex; align-items: center; padding-left: 9px; gap: 10px; background: #f5f5f5; }
.pt { width: 17px; height: 17px; }
.slider { margin-left: 53px; flex: 1; height: 1px; background: #aaa; position: relative; box-shadow: 0 2px 0 #ddd; }
.knob { position: absolute; left: 30px; top: -8px; width: 7px; height: 17px; background: #e8e8e8; border: 1px solid #bbb; border-radius: 2px; }
.ktick { position: absolute; left: 0; top: -6px; width: 1px; height: 13px; background: #aaa; }

.status { height: 37px; flex: none; background: #f8f8f8; border-top: 1px solid #e4e4e4; display: flex; align-items: center; font-size: 12.800px; color: #555; white-space: nowrap; border-bottom: 1px solid #ddd; }
.hint { width: 817px; flex: none; }
.objinfo { width: 520px; flex: none; font-size: 12.500px; }
.fillic { width: 16px; height: 16px; }
.fillsw { width: 22px; height: 23px; flex: none; background: #ff0; border: 1px solid #e2d770; margin-left: 2px; }
.rgb { margin-left: 4px; width: 168px; flex: none; font-size: 12px; letter-spacing: 0; word-spacing: 0; }
.penic { width: 12px; height: 20px; }
.nonesw { width: 21px; height: 22px; margin-left: 3px; }
.noneword { margin-left: 4px; font-size: 13px; }

.taskbar { height: 40px; flex: none; background: #2f2f2f; display: flex; align-items: center; position: relative; }
.tk { width: 49.200px; height: 40px; flex: none; display: flex; align-items: center; justify-content: center; position: relative; }
.tk.first { width: 44px; }
.tk.second { width: 60px; }
.tk.app::after { content: ""; position: absolute; left: 4px; right: 5px; bottom: 0; height: 3px; background: #b9b9b9; }
.tk.active { background: #5a5a5a; }
.tk.active::after { left: 0; right: 0; }
.ti { width: 24px; height: 24px; }
.ttxt { font: 10px "Liberation Sans", sans-serif; text-anchor: middle; }
.ttxt.blue { fill: #4eb4f0; }
.ttxt.purple { fill: #c493f0; }
.weather { margin-left: 596px; width: 98px; height: 40px; flex: none; position: relative; display: flex; align-items: center; color: #ccc; font-size: 14px; }
.cloud { width: 24px; height: 18px; }
.wtext { margin-left: 7px; white-space: nowrap; }
.cpu { position: absolute; left: 37px; top: 4px; width: 70px; font-size: 13px; line-height: 17px; text-align: center; color: #c6c6c6; }
.tray { margin-left: 13px; display: flex; align-items: center; color: #ddd; }
.tr { width: 24px; height: 40px; flex: none; display: flex; align-items: center; justify-content: center; }
.upc { font-size: 15px; padding-top: 6px; }
.tri { width: 17px; height: 17px; }
.zh { font-size: 13px; font-weight: 700; color: #eee; }
.wps { margin-left: 4px; }
.clock { margin-left: 17px; width: 66px; flex: none; font-size: 12px; line-height: 19px; color: #d6d6d6; white-space: nowrap; }

.wm {
  position: absolute;
  left: 1413px;
  top: 37px;
  width: 315px;
  height: 163px;
  overflow: hidden;
  display: flex;
  background:
    radial-gradient(ellipse 52px 36px at 258px 68px, rgba(176, 218, 120, .8), rgba(176, 218, 120, 0)),
    radial-gradient(ellipse 34px 32px at 158px 70px, rgba(214, 224, 120, .6), rgba(214, 224, 120, 0)),
    radial-gradient(ellipse 60px 18px at 220px 106px, rgba(190, 225, 235, .75), rgba(190, 225, 235, 0)),
    radial-gradient(ellipse 110px 20px at 127px 153px, rgba(180, 180, 180, .45), rgba(180, 180, 180, 0)),
    linear-gradient(to bottom, #ececec 0 82%, rgba(236, 236, 236, 0) 100%);
}
.wmlogo { width: 129px; height: 123px; margin: 15px 0 0 15px; }
.wmtext { margin-left: 20px; display: flex; flex-direction: column; white-space: nowrap; }
.wmcn { font: 700 80px/1 "Noto Sans CJK SC", sans-serif; color: #808080; margin-top: 17px; word-spacing: 8px; height: 88px; }
.wmen { font: 600 23px/1 "Open Sans", sans-serif; color: #7d7d7d; margin-top: 6px; }

.spot { position: absolute; left: 1503px; top: 251px; width: 88px; height: 88px; border-radius: 50%; background: #f5f500; mix-blend-mode: multiply; }
.dropline { position: absolute; left: 1470px; top: 331px; width: 258px; height: 7px; display: flex; align-items: center; }
.dropline::after { content: ""; flex: 1; height: 2px; background: #1f8eb0; }
.dropline i { width: 7px; height: 7px; flex: none; border: 1.500px solid #2aa6cf; border-radius: 50%; background: #fff; }
.cursor { position: absolute; left: 1547px; top: 298px; width: 24px; height: 38px; }
.subtitle {
  position: absolute;
  left: 230px;
  top: 930px;
  white-space: nowrap;
  font: 500 56px/76px "Noto Sans CJK SC", sans-serif;
  letter-spacing: 5.900px;
  color: #fff;
  -webkit-text-stroke: 6px #141414;
  paint-order: stroke fill;
}
.reddot { position: absolute; left: 1724px; top: 1042px; width: 6px; height: 6px; border-radius: 50%; background: #e32; }
```
